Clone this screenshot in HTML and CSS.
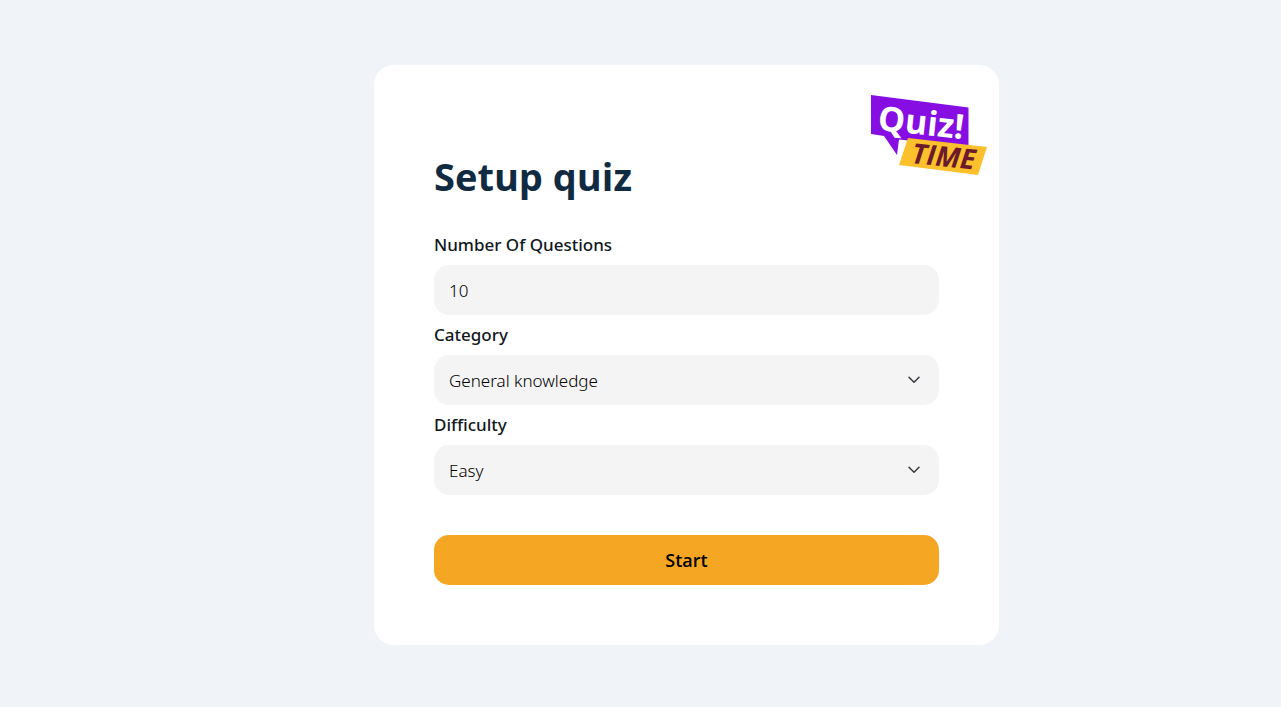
FILE: index.html
```html
<!DOCTYPE html>
<html lang="en">
<head>
  <meta charset="utf-8">
  <meta name="viewport" content="width=device-width, initial-scale=1">
  <title>Setup quiz</title>
  <link rel="stylesheet" href="styles.css">
</head>
<body>
  <main class="page">
    <form class="card">
      <svg class="logo" viewBox="0 0 120 84" role="img" aria-label="Quiz! Time">
        <path class="logo-bubble" d="M4 2 101.500 14.500 101.500 54 32 46.500 30 62 17 43 4 41Z"/>
        <text class="logo-quiz" transform="translate(10 37) rotate(6)">Quiz!</text>
        <path class="logo-banner" d="M41 45 120 54 111 82 32 72Z"/>
        <text class="logo-time" transform="translate(44 70) rotate(6)">TIME</text>
      </svg>
      <h1 class="title">Setup quiz</h1>
      <label class="label" for="amount">Number Of Questions</label>
      <input class="field" id="amount" name="amount" type="text" inputmode="numeric" value="10">
      <label class="label" for="category">Category</label>
      <div class="select">
        <select class="field" id="category" name="category">
          <option>General knowledge</option>
          <option>Sports</option>
          <option>History</option>
        </select>
        <svg class="chevron" viewBox="0 0 12 8" aria-hidden="true"><path d="M1 1.200 6 6.200 11 1.200"/></svg>
      </div>
      <label class="label" for="difficulty">Difficulty</label>
      <div class="select">
        <select class="field" id="difficulty" name="difficulty">
          <option>Easy</option>
          <option>Medium</option>
          <option>Hard</option>
        </select>
        <svg class="chevron" viewBox="0 0 12 8" aria-hidden="true"><path d="M1 1.200 6 6.200 11 1.200"/></svg>
      </div>
      <button class="start" type="submit">Start</button>
    </form>
  </main>
</body>
</html>
```

FILE: styles.css
```css
* {
  box-sizing: border-box;
}

body {
  margin: 0;
  background: #f0f4f8;
  color: #17212b;
  font-family: "Segoe UI", "Noto Sans", "Open Sans", sans-serif;
}

.page {
  display: flex;
  align-items: center;
  justify-content: center;
  min-height: 100vh;
  padding: 24px 0 22px 92px;
}

.card {
  position: relative;
  display: flex;
  flex-direction: column;
  width: 100%;
  max-width: 625px;
  padding: 60px;
  border-radius: 20px;
  background: #fff;
}

.logo {
  position: absolute;
  top: 28px;
  right: 12px;
  width: 120px;
  height: 84px;
}

.logo-bubble {
  fill: #860ee3;
}

.logo-banner {
  fill: #fbc02b;
}

.logo-quiz,
.logo-time {
  font-family: "Open Sans", "Noto Sans", sans-serif;
  font-weight: 700;
}

.logo-quiz {
  fill: #fff;
  font-size: 34px;
}

.logo-time {
  fill: #6d1a2c;
  font-size: 28px;
  font-style: italic;
}

.title {
  margin: 23px 0 21px;
  color: #102a42;
  font-family: "Segoe UI", "Open Sans", "Noto Sans", sans-serif;
  font-size: 38px;
  font-weight: 700;
  line-height: 56px;
}

.label {
  color: #111820;
  font-size: 17px;
  font-weight: 500;
  line-height: 40px;
}

.field {
  width: 100%;
  height: 50px;
  padding: 1px 15px 0;
  border: 0;
  border-radius: 15px;
  appearance: none;
  background: #f4f4f4;
  color: #000;
  font: 300 17px "Segoe UI", "Noto Sans", "Open Sans", sans-serif;
}

.select {
  position: relative;
}

.chevron {
  position: absolute;
  top: 21px;
  right: 19px;
  width: 12px;
  height: 8px;
  fill: none;
  stroke: #343a40;
  stroke-width: 1.5;
  stroke-linecap: round;
  stroke-linejoin: round;
  pointer-events: none;
}

.start {
  height: 50px;
  margin-top: 40px;
  border: 0;
  border-radius: 15px;
  background: #f5a623;
  color: #000;
  font: 600 18px "Segoe UI", "Open Sans", "Noto Sans", sans-serif;
}
```
